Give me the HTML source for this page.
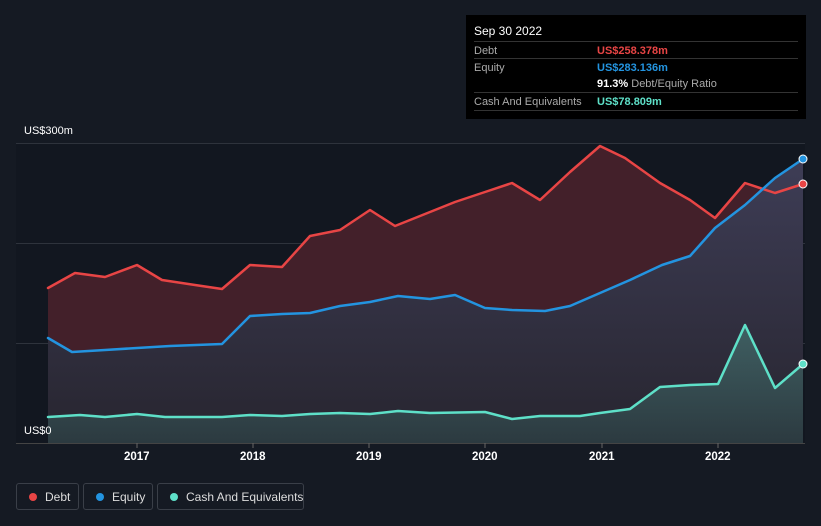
<!DOCTYPE html>
<html><head><meta charset="utf-8"><style>
html,body{margin:0;width:821px;height:526px;overflow:hidden}
body{background:#151a23;font-family:"Liberation Sans",sans-serif;position:relative;color:#fff}
.tt{position:absolute;left:466px;top:15px;width:340px;height:104px;background:#000;font-size:11px}
.tt .h{position:absolute;left:8px;top:9px;color:#fff;font-size:12px}
.row{position:absolute;left:8px;width:324px;height:17px;border-top:1px solid #333;white-space:nowrap}
.row span{position:absolute;top:3px}
.lbl{left:0;color:#aaa}
.val{left:123px;font-weight:bold}
.leg{position:absolute;top:483px;height:27px;border:1px solid #3a3f48;border-radius:3px;font-size:12px;color:#ddd;line-height:26px;box-sizing:border-box;white-space:nowrap}
.leg i{position:absolute;left:12px;top:9px;width:8px;height:8px;border-radius:50%}
.leg span{position:absolute;left:28px;top:0}
.ax{position:absolute;font-size:11px;color:#fff;white-space:nowrap}
.yr{font-weight:bold;font-size:11.5px}
</style></head><body>
<svg width="821" height="526" style="position:absolute;left:0;top:0">
<defs>
<linearGradient id="eq" x1="0" y1="0" x2="0" y2="1"><stop offset="0" stop-color="#3e3d56"/><stop offset="1" stop-color="#27252f"/></linearGradient>
<linearGradient id="ca" x1="0" y1="0" x2="0" y2="1"><stop offset="0" stop-color="#3f5f62"/><stop offset="1" stop-color="#2c3a40"/></linearGradient>
</defs>
<rect x="16" y="143" width="789" height="300" fill="#121720"/>
<g stroke="#2e333c" stroke-width="1"><line x1="16" y1="143.5" x2="805" y2="143.5"/><line x1="16" y1="243.5" x2="805" y2="243.5"/><line x1="16" y1="343.5" x2="805" y2="343.5"/><line x1="16" y1="443.5" x2="805" y2="443.5" stroke="#444"/></g>
<polygon fill="#43202a" points="48,443 48,288 75,273 105,277 137,265 162,280 195,285 222,289 250,265 282,267 310,236 340,230 370,210 395,226 425,214 455,202 485,192 512,183 540,200 570,172 600,146 625,158 660,183 690,200 715,218 745,183 775,193 803,184 803,443"/>
<polygon fill="url(#eq)" points="48,443 48,338 72,352 105,350 137,348 170,346 222,344 250,316 282,314 310,313 340,306 370,302 398,296 430,299 455,295 485,308 512,310 545,311 570,306 600,293 630,280 662,265 690,256 715,228 745,205 775,178 803,159 803,443"/>
<polygon fill="url(#ca)" points="48,443 48,417 80,415 105,417 137,414 165,417 222,417 250,415 282,416 310,414 340,413 370,414 398,411 430,413 485,412 512,419 540,416 580,416 600,413 630,409 660,387 690,385 718,384 745,325 775,388 803,364 803,443"/>
<g fill="none" stroke-width="2.5" stroke-linejoin="round" stroke-linecap="round">
<polyline stroke="#e84545" points="48,288 75,273 105,277 137,265 162,280 195,285 222,289 250,265 282,267 310,236 340,230 370,210 395,226 425,214 455,202 485,192 512,183 540,200 570,172 600,146 625,158 660,183 690,200 715,218 745,183 775,193 803,184"/>
<polyline stroke="#2394e0" points="48,338 72,352 105,350 137,348 170,346 222,344 250,316 282,314 310,313 340,306 370,302 398,296 430,299 455,295 485,308 512,310 545,311 570,306 600,293 630,280 662,265 690,256 715,228 745,205 775,178 803,159"/>
<polyline stroke="#5ee0c8" points="48,417 80,415 105,417 137,414 165,417 222,417 250,415 282,416 310,414 340,413 370,414 398,411 430,413 485,412 512,419 540,416 580,416 600,413 630,409 660,387 690,385 718,384 745,325 775,388 803,364"/>
</g>
<circle cx="803" cy="159" r="4" fill="#2394e0" stroke="#fff" stroke-width="1"/>
<circle cx="803" cy="184" r="4" fill="#e84545" stroke="#fff" stroke-width="1"/>
<circle cx="803" cy="364" r="4" fill="#5ee0c8" stroke="#fff" stroke-width="1"/>
<g stroke="#666"><line x1="137" y1="443" x2="137" y2="448"/><line x1="253" y1="443" x2="253" y2="448"/><line x1="369" y1="443" x2="369" y2="448"/><line x1="485" y1="443" x2="485" y2="448"/><line x1="602" y1="443" x2="602" y2="448"/><line x1="718" y1="443" x2="718" y2="448"/></g>
</svg>
<div class="ax" style="left:24px;top:125px">US$300m</div>
<div class="ax" style="left:24px;top:425px">US$0</div>
<div class="ax yr" style="left:124px;top:451px">2017</div>
<div class="ax yr" style="left:240px;top:451px">2018</div>
<div class="ax yr" style="left:356px;top:451px">2019</div>
<div class="ax yr" style="left:472px;top:451px">2020</div>
<div class="ax yr" style="left:589px;top:451px">2021</div>
<div class="ax yr" style="left:705px;top:451px">2022</div>
<div class="tt">
<div class="h">Sep 30 2022</div>
<div class="row" style="top:26px"><span class="lbl">Debt</span><span class="val" style="color:#e84545">US$258.378m</span></div>
<div class="row" style="top:43px"><span class="lbl">Equity</span><span class="val" style="color:#2394e0">US$283.136m</span></div>
<div class="row" style="top:60px;border-top:none"><span class="val" style="color:#fff">91.3% <b style="font-weight:normal;color:#aaa">Debt/Equity Ratio</b></span></div>
<div class="row" style="top:77px"><span class="lbl">Cash And Equivalents</span><span class="val" style="color:#5ee0c8">US$78.809m</span></div>
<div class="row" style="top:95px;height:0"></div>
</div>
<div class="leg" style="left:16px;width:63px"><i style="background:#e84545"></i><span>Debt</span></div>
<div class="leg" style="left:83px;width:70px"><i style="background:#2394e0"></i><span>Equity</span></div>
<div class="leg" style="left:157px;width:147px"><i style="background:#5ee0c8"></i><span>Cash And Equivalents</span></div>
</body></html>
